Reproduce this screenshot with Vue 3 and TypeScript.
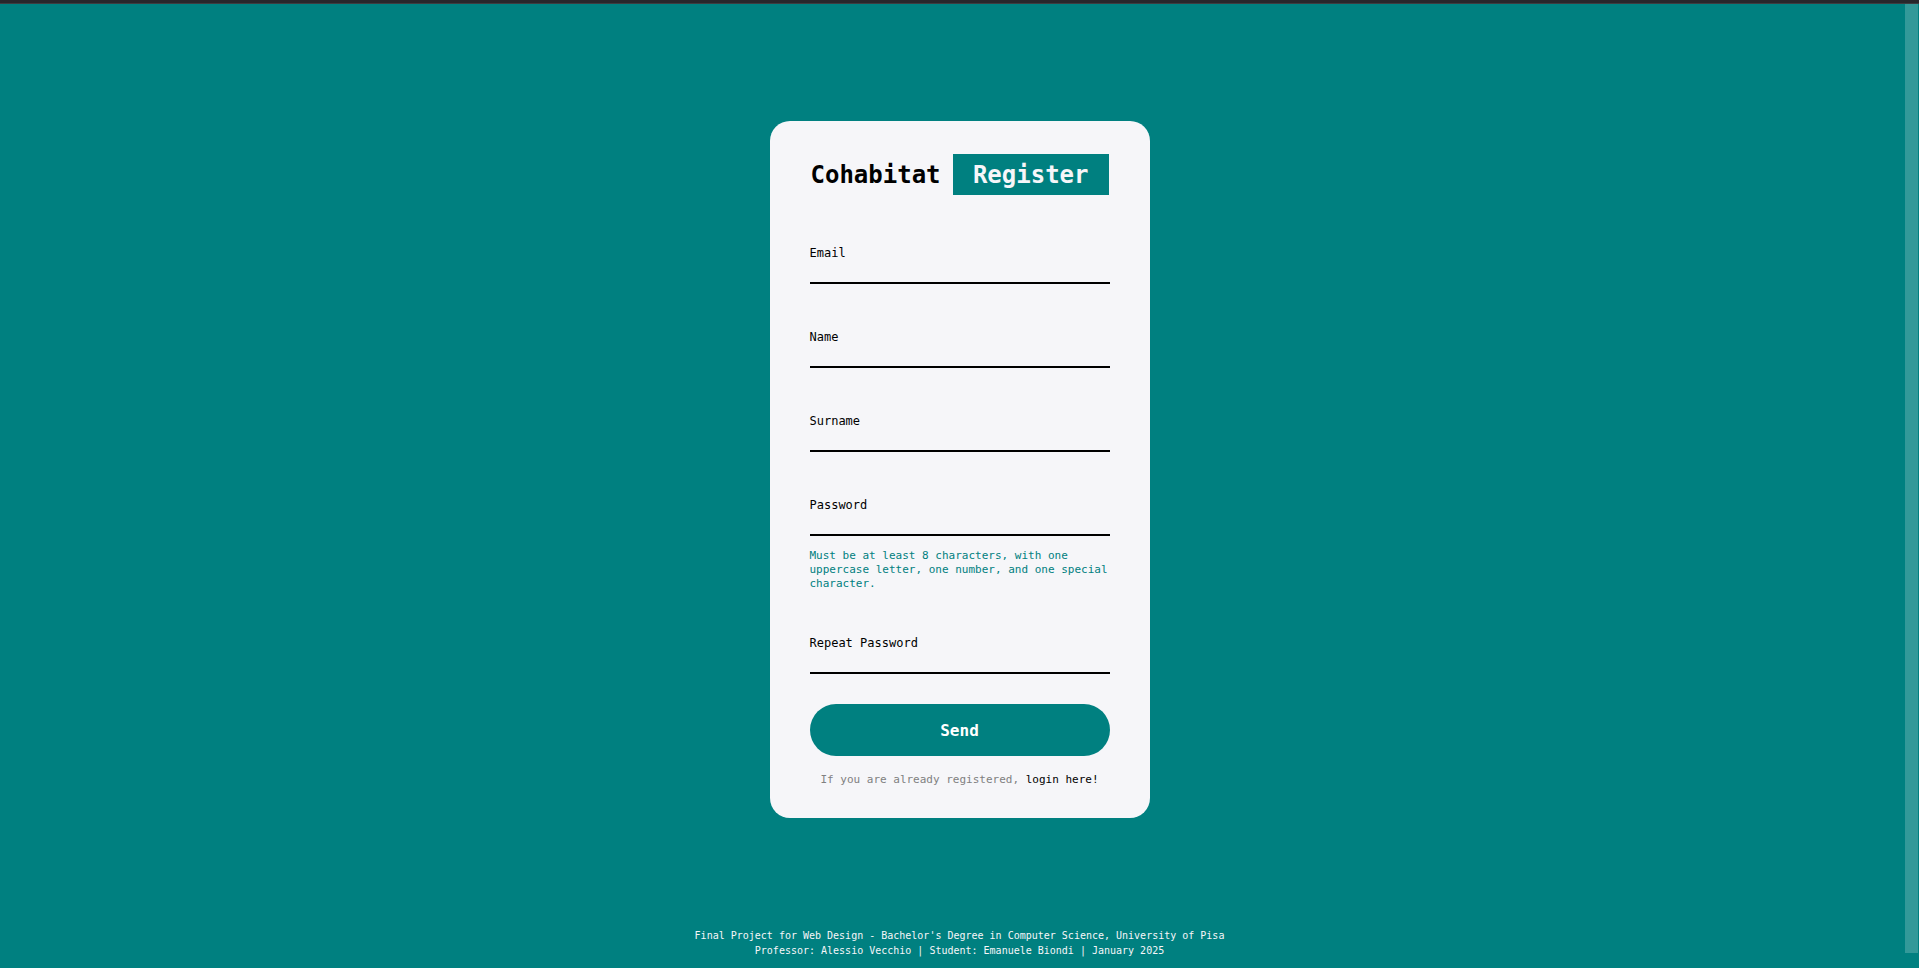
<script setup lang="ts">
import { reactive } from 'vue'

interface Field {
  id: string
  label: string
  type: string
  autocomplete: string
  hint?: string
}

const fields: Field[] = [
  { id: 'email', label: 'Email', type: 'email', autocomplete: 'email' },
  { id: 'name', label: 'Name', type: 'text', autocomplete: 'given-name' },
  { id: 'surname', label: 'Surname', type: 'text', autocomplete: 'family-name' },
  {
    id: 'password',
    label: 'Password',
    type: 'password',
    autocomplete: 'new-password',
    hint: 'Must be at least 8 characters, with one uppercase letter, one number, and one special character.',
  },
  { id: 'repeat', label: 'Repeat Password', type: 'password', autocomplete: 'new-password' },
]

const values = reactive<Record<string, string>>({
  email: '',
  name: '',
  surname: '',
  password: '',
  repeat: '',
})
</script>

<template>
  <div class="page">
    <div class="top-edge"></div>
    <main class="main">
      <form class="card" @submit.prevent>
        <h1 class="title">
          <span class="brand">Cohabitat</span>
          <span class="badge">Register</span>
        </h1>
        <div class="fields">
          <div v-for="field in fields" :key="field.id" class="field">
            <label class="label" :for="field.id">{{ field.label }}</label>
            <input
              :id="field.id"
              v-model="values[field.id]"
              class="input"
              :type="field.type"
              :autocomplete="field.autocomplete"
              :aria-describedby="field.hint ? field.id + '-hint' : undefined"
            />
            <p v-if="field.hint" :id="field.id + '-hint'" class="hint">{{ field.hint }}</p>
          </div>
        </div>
        <button class="send" type="submit">Send</button>
        <p class="login">If you are already registered, <a href="#login">login here!</a></p>
      </form>
    </main>
    <footer class="footer">
      <p>Final Project for Web Design - Bachelor's Degree in Computer Science, University of Pisa</p>
      <p>Professor: Alessio Vecchio | Student: Emanuele Biondi | January 2025</p>
    </footer>
    <div class="scroll-thumb" aria-hidden="true"></div>
  </div>
</template>

<style>
body {
  margin: 0;
  background: #008080;
}
</style>

<style scoped>
.page {
  position: relative;
  display: flex;
  flex-direction: column;
  box-sizing: border-box;
  min-height: 100vh;
  background: #008080;
  color: #000;
  font-family: Consolas, 'DejaVu Sans Mono', monospace;
}

.top-edge {
  height: 3px;
  background: #28272c;
  border-bottom: 1px solid #3c3d41;
}

.main {
  flex: 1;
  display: flex;
  align-items: center;
  justify-content: center;
  padding-top: 7px;
}

.card {
  box-sizing: border-box;
  width: 380px;
  max-width: 100%;
  padding: 33px 40px 31px;
  border-radius: 20px;
  background: #f6f6f9;
}

.title {
  display: flex;
  align-items: center;
  justify-content: space-between;
  margin: 0 0 50px;
  padding: 0 1px;
  font-size: 24px;
  line-height: 39px;
  font-weight: 700;
  white-space: nowrap;
}

.brand {
  padding-top: 2px;
}

.badge {
  padding: 2px 20px 0;
  background: #008080;
  color: #f6f6f9;
}

.fields {
  display: flex;
  flex-direction: column;
  gap: 45px;
}

.field {
  display: flex;
  flex-direction: column;
}

.label {
  font-size: 12px;
  line-height: 16px;
}

.input {
  box-sizing: border-box;
  width: 100%;
  height: 23px;
  padding: 0;
  border: 0;
  border-bottom: 2px solid #000;
  border-radius: 0;
  outline: none;
  background: transparent;
  font: inherit;
  font-size: 12px;
}

.hint {
  margin: 13px 0 -1px;
  color: #008080;
  font-size: 11px;
  line-height: 14px;
}

.send {
  display: block;
  width: 100%;
  height: 52px;
  margin: 30px 0 17px;
  padding: 0;
  border: 0;
  border-radius: 26px;
  background: #008080;
  color: #fff;
  font: inherit;
  font-size: 16px;
  font-weight: 700;
  cursor: pointer;
}

.login {
  margin: 0;
  color: #808080;
  font-size: 11px;
  line-height: 14px;
  text-align: center;
}

.login a {
  color: #000;
  text-decoration: none;
}

.footer {
  padding-bottom: 10px;
  color: #f6f6f9;
  font-size: 10px;
  line-height: 15px;
  text-align: center;
}

.footer p {
  margin: 0;
}

.scroll-thumb {
  position: absolute;
  top: 4px;
  right: 1px;
  bottom: 15px;
  width: 13px;
  background: #339999;
}
</style>
